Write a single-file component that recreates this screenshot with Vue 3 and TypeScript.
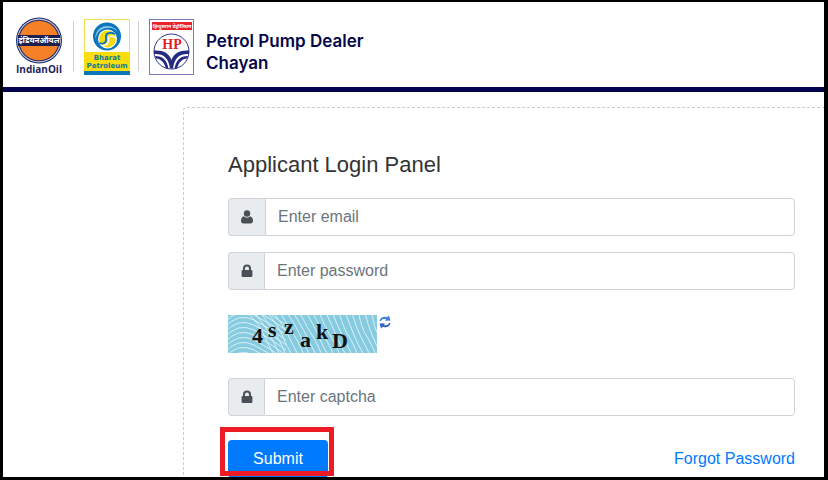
<script setup lang="ts">
import { ref } from 'vue'

interface Glyph {
  char: string
  x: number
  y: number
}

const email = ref('')
const password = ref('')
const captcha = ref('')

const glyphs: Glyph[] = [
  { char: '4', x: 24, y: 28 },
  { char: 's', x: 40, y: 22 },
  { char: 'z', x: 56, y: 19 },
  { char: 'a', x: 72, y: 32 },
  { char: 'k', x: 88, y: 24 },
  { char: 'D', x: 104, y: 33 },
]

// Steep lines that lean to the right across the captcha background
const slants: string[] = Array.from({ length: 22 }, (_, i) => {
  const x = 34 + i * 6
  return `M${x - 14 + i / 2} -2Q${x - 2} ${10 + (i % 3) * 2} ${x + 2} 20T${x + 12} 40`
})
// Flatter arcs that fill its left part
const arcs: string[] = Array.from({ length: 14 }, (_, i) => {
  const y = i * 5 - 16
  return `M-4 ${y + 14}Q10 ${y - 2} 26 ${y + 6}T58 ${y + 26}`
})
</script>

<template>
  <div class="frame">
    <header class="header">
      <div class="logos">
        <svg class="logo-io" viewBox="0 0 48 58" role="img" aria-label="IndianOil">
          <circle cx="24" cy="23.500" r="23" fill="#1c2a66" />
          <circle cx="24" cy="23.500" r="21.900" fill="#c9cbe0" />
          <circle cx="24" cy="23.500" r="20.800" fill="#1c2a66" />
          <circle cx="24" cy="23.500" r="19.800" fill="#f58025" />
          <rect x="3" y="18" width="42" height="11" fill="#1c2050" />
          <text x="24" y="26" class="io-band" text-anchor="middle">इंडियनऑयल</text>
          <text x="24" y="56" class="io-name" text-anchor="middle">IndianOil</text>
        </svg>
        <span class="divider"></span>
        <svg class="logo-bp" viewBox="0 0 46 56" role="img" aria-label="Bharat Petroleum">
          <rect x="0.500" y="0.500" width="45" height="55" fill="#fff" stroke="#f0dc50" />
          <rect x="0" y="33" width="46" height="19" fill="#fbdc0c" />
          <rect x="0" y="52" width="46" height="4" fill="#0a78b8" />
          <circle cx="23" cy="17.500" r="14" fill="#0b76bd" />
          <path d="M11.500 20A12 11 0 0 1 34 13A13 13 0 0 0 11.500 20Z" fill="#8fc6e6" />
          <circle cx="23.500" cy="20" r="9.500" fill="#fff" />
          <circle cx="23.500" cy="20" r="8.500" fill="#f6d90e" />
          <path d="M31 15C25 12 21 15 22 19S20 26 15 24" fill="none" stroke="#0b76bd" stroke-width="1.800" />
          <path d="M32 19C27 15 24 18 24.500 21S21 28 18 26" fill="none" stroke="#fff" stroke-width="1.400" />
          <text x="23" y="41" class="bp-name" text-anchor="middle">Bharat</text>
          <text x="23" y="49" class="bp-name" text-anchor="middle">Petroleum</text>
        </svg>
        <span class="divider divider-end"></span>
        <svg class="logo-hp" viewBox="0 0 45 56" role="img" aria-label="HP">
          <rect x="0.500" y="0.500" width="44" height="55" fill="#fff" stroke="#7f78b8" />
          <rect x="3" y="3" width="40" height="8" fill="#e8232b" />
          <text x="23" y="9" class="hp-band" text-anchor="middle">हिन्दुस्तान पेट्रोलियम</text>
          <circle cx="22.500" cy="32.500" r="17.500" fill="#fff" stroke="#33358c" />
          <path d="M5 31.500C14 31 20 34 22.500 41C25 34 31 31 40 31.500L40 35C31 34.500 25.500 38 24 49.500H21C19.500 38 14 34.500 5 35Z" fill="#252a80" />
          <path d="M6 37C14 37 18 41 19.500 50L17 49.500C15 43 12 40 7 39.500ZM39 37C31 37 27 41 25.500 50L28 49.500C30 43 33 40 38 39.500Z" fill="#252a80" />
          <text x="23" y="30" class="hp-name" text-anchor="middle">HP</text>
        </svg>
      </div>
      <h1 class="title">Petrol Pump Dealer<br />Chayan</h1>
    </header>

    <main class="content">
      <form class="panel" @submit.prevent>
        <h2 class="heading">Applicant Login Panel</h2>

        <div class="field">
          <label class="addon addon-user" for="email" aria-label="Email">
            <svg class="glyph" viewBox="0 0 12 14" aria-hidden="true">
              <circle cx="6" cy="3.500" r="3.200" />
              <path d="M2.800 6.300C0.800 6.800 0 8.800 0 11C0 12.600 1 13.500 2.300 13.500H9.700C11 13.500 12 12.600 12 11C12 8.800 11.200 6.800 9.200 6.300A4.500 4.500 0 0 1 2.800 6.300Z" />
            </svg>
          </label>
          <input id="email" v-model="email" class="input" type="email" placeholder="Enter email" />
        </div>

        <div class="field">
          <label class="addon" for="password" aria-label="Password">
            <svg class="glyph" viewBox="0 0 12 14" aria-hidden="true">
              <path d="M2 6V4.500A4 4 0 0 1 10 4.500V6H10.400A1 1 0 0 1 11.400 7V12A1 1 0 0 1 10.400 13H1.600A1 1 0 0 1 0.600 12V7A1 1 0 0 1 1.600 6ZM4 6H8V4.500A2 2 0 0 0 4 4.500Z" />
            </svg>
          </label>
          <input id="password" v-model="password" class="input" type="password" placeholder="Enter password" />
        </div>

        <div class="captcha">
          <svg class="captcha-image" viewBox="0 0 149 38" role="img" aria-label="Captcha">
            <rect width="149" height="38" fill="#86cbdf" />
            <g fill="none" stroke="#d9f1f6" stroke-width="1">
              <path v-for="d in slants" :key="d" :d="d" />
              <path v-for="d in arcs" :key="d" :d="d" />
            </g>
            <text v-for="g in glyphs" :key="g.char" :x="g.x" :y="g.y" class="captcha-char">{{ g.char }}</text>
          </svg>
          <button class="refresh" type="button" aria-label="Refresh captcha">
            <svg viewBox="0 0 12 14" aria-hidden="true">
              <path d="M0.500 6C1 2.500 5 0.500 8.300 2.300L10 0.500L11.500 5.500L6 5.800L7.200 4.200C5 3 2.800 4 2 6Z" fill="#3f7fe0" />
              <path d="M11.500 8C11 11.500 7 13.500 3.700 11.700L2 13.500L0.500 8.500L6 8.200L4.800 9.800C7 11 9.200 10 10 8Z" fill="#2f62c8" />
            </svg>
          </button>
        </div>

        <div class="field">
          <label class="addon" for="captcha" aria-label="Captcha">
            <svg class="glyph" viewBox="0 0 12 14" aria-hidden="true">
              <path d="M2 6V4.500A4 4 0 0 1 10 4.500V6H10.400A1 1 0 0 1 11.400 7V12A1 1 0 0 1 10.400 13H1.600A1 1 0 0 1 0.600 12V7A1 1 0 0 1 1.600 6ZM4 6H8V4.500A2 2 0 0 0 4 4.500Z" />
            </svg>
          </label>
          <input id="captcha" v-model="captcha" class="input" type="text" placeholder="Enter captcha" />
        </div>

        <div class="actions">
          <div class="submit-wrap">
            <button class="submit" type="submit">Submit</button>
            <span class="highlight"></span>
          </div>
          <a class="forgot" href="#">Forgot Password</a>
        </div>
      </form>
    </main>
  </div>
</template>

<style>
body {
  background: #fff;
}
</style>

<style scoped>
.frame {
  box-sizing: border-box;
  height: 100vh;
  overflow: hidden;
  border: solid #000;
  border-width: 2px 4px 3px 3px;
  background: #fff;
  font-family: "Liberation Sans", Arial, sans-serif;
  font-size: 16px;
  line-height: 24px;
}

.header {
  display: flex;
  align-items: flex-start;
  gap: 12px;
  padding: 15px 12px 12px;
  border-bottom: 5px solid #02024e;
}

.logos {
  display: flex;
  align-items: flex-start;
}

.logo-io {
  width: 48px;
  height: 58px;
}

.logo-bp {
  width: 46px;
  height: 56px;
  margin-top: 2px;
}

.logo-hp {
  width: 45px;
  height: 56px;
  margin-top: 2px;
}

.divider {
  width: 1px;
  height: 50px;
  margin: 4px 10px 0;
  background: #cfcfcf;
}

.divider-end {
  margin-left: 8px;
}

.io-band {
  fill: #fff;
  font: 700 8px "Noto Sans", sans-serif;
}

.io-name {
  fill: #1b1f5c;
  font: 700 10px "Open Sans", sans-serif;
}

.bp-name {
  fill: #0c7a9c;
  font: 700 7px "DejaVu Sans", sans-serif;
}

.hp-band {
  fill: #fff;
  font: 700 5px "Noto Sans", sans-serif;
}

.hp-name {
  fill: #e31b23;
  font: 700 14px "Liberation Serif", serif;
}

.title {
  margin: 13px 0 0;
  color: #05054a;
  font: 600 17px/22px Inter, sans-serif;
}

.content {
  padding: 15px 0 0 180px;
}

.panel {
  padding: 44px 29px 24px 44px;
  border: dashed #ccc;
  border-width: 1px 0 1px 1px;
  border-radius: 4px 0 0 4px;
}

.heading {
  margin: 0 0 20px;
  color: #333;
  font-size: 22px;
  font-weight: 400;
  line-height: 26px;
}

.field {
  display: flex;
  height: 38px;
  margin-bottom: 16px;
}

.addon {
  box-sizing: border-box;
  display: flex;
  align-items: center;
  justify-content: center;
  width: 36px;
  border: 1px solid #ced4da;
  border-right: 0;
  border-radius: 4px 0 0 4px;
  background: #e9ecef;
}

.addon-user {
  width: 37px;
}

.glyph {
  width: 12px;
  height: 14px;
  fill: #495057;
}

.input {
  box-sizing: border-box;
  flex: 1;
  min-width: 0;
  padding: 6px 12px;
  border: 1px solid #ced4da;
  border-radius: 0 4px 4px 0;
  background: #fff;
  color: #495057;
  font: inherit;
}

.input::placeholder {
  color: #6c757d;
  opacity: 1;
}

.captcha {
  display: flex;
  align-items: flex-start;
  gap: 2px;
  margin: 25px 0;
}

.captcha-image {
  width: 149px;
  height: 38px;
}

.captcha-char {
  fill: #111;
  font: 700 22px "Liberation Serif", serif;
}

.refresh {
  width: 12px;
  height: 14px;
  padding: 0;
  border: 0;
  background: none;
  line-height: 0;
  cursor: pointer;
}

.actions {
  display: flex;
  align-items: flex-start;
  justify-content: space-between;
  padding-top: 8px;
}

.submit-wrap {
  position: relative;
}

.submit {
  display: block;
  width: 100px;
  height: 38px;
  padding: 0;
  border: 0;
  border-radius: 4px;
  background: #007bff;
  color: #fff;
  font: inherit;
  cursor: pointer;
}

.highlight {
  position: absolute;
  inset: -13px -6px 2px -8px;
  border: 5px solid #ed1c24;
  pointer-events: none;
}

.forgot {
  margin-top: 7px;
  color: #007bff;
  text-decoration: none;
}
</style>
